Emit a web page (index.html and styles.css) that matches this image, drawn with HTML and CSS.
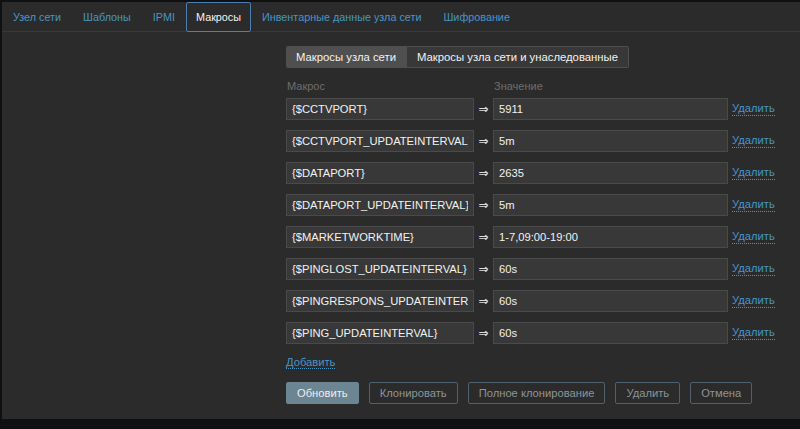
FILE: index.html
```html
<!DOCTYPE html>
<html lang="ru">
<head>
  <meta charset="UTF-8" />
  <title>Макросы узла сети</title>
  <link rel="stylesheet" href="styles.css">
</head>
<body>
  <div class="panel">
    <div class="tabs">
      <a class="tab" href="#">Узел сети</a>
      <a class="tab" href="#">Шаблоны</a>
      <a class="tab" href="#">IPMI</a>
      <a class="tab active" href="#">Макросы</a>
      <a class="tab" href="#">Инвентарные данные узла сети</a>
      <a class="tab" href="#">Шифрование</a>
    </div>

    <div class="form">
      <div class="switch">
        <button class="switch-btn selected">Макросы узла сети</button>
        <button class="switch-btn">Макросы узла сети и унаследованные</button>
      </div>

      <div class="macros head-row">
        <div class="head">Макрос</div>
        <div></div>
        <div class="head">Значение</div>
      </div>

      <div class="macros">
        <input class="field" type="text" value="{$CCTVPORT}" />
        <span class="arrow">&rArr;</span>
        <input class="field" type="text" value="5911" />
        <a class="link" href="#">Удалить</a>

        <input class="field" type="text" value="{$CCTVPORT_UPDATEINTERVAL}" />
        <span class="arrow">&rArr;</span>
        <input class="field" type="text" value="5m" />
        <a class="link" href="#">Удалить</a>

        <input class="field" type="text" value="{$DATAPORT}" />
        <span class="arrow">&rArr;</span>
        <input class="field" type="text" value="2635" />
        <a class="link" href="#">Удалить</a>

        <input class="field" type="text" value="{$DATAPORT_UPDATEINTERVAL}" />
        <span class="arrow">&rArr;</span>
        <input class="field" type="text" value="5m" />
        <a class="link" href="#">Удалить</a>

        <input class="field" type="text" value="{$MARKETWORKTIME}" />
        <span class="arrow">&rArr;</span>
        <input class="field" type="text" value="1-7,09:00-19:00" />
        <a class="link" href="#">Удалить</a>

        <input class="field" type="text" value="{$PINGLOST_UPDATEINTERVAL}" />
        <span class="arrow">&rArr;</span>
        <input class="field" type="text" value="60s" />
        <a class="link" href="#">Удалить</a>

        <input class="field" type="text" value="{$PINGRESPONS_UPDATEINTERVAL}" />
        <span class="arrow">&rArr;</span>
        <input class="field" type="text" value="60s" />
        <a class="link" href="#">Удалить</a>

        <input class="field" type="text" value="{$PING_UPDATEINTERVAL}" />
        <span class="arrow">&rArr;</span>
        <input class="field" type="text" value="60s" />
        <a class="link" href="#">Удалить</a>
      </div>

      <div class="add-row">
        <a class="link" href="#">Добавить</a>
      </div>

      <div class="actions">
        <button class="btn">Обновить</button>
        <button class="btn alt">Клонировать</button>
        <button class="btn alt">Полное клонирование</button>
        <button class="btn alt">Удалить</button>
        <button class="btn alt">Отмена</button>
      </div>
    </div>
  </div>
</body>
</html>
```

FILE: styles.css
```css
body {
  margin: 0;
  background-color: #0e1012;
  font-family: "Liberation Sans", Arial, sans-serif;
  font-size: 11px;
  color: #f2f2f2;
  overflow: hidden;
}

.panel {
  margin: 2px 0 0 2px;
  height: 417px;
  background-color: #2b2b2b;
}

.tabs {
  display: flex;
  height: 29px;
  border-bottom: 1px solid #383838;
}

.tab {
  display: block;
  box-sizing: border-box;
  height: 30px;
  line-height: 28px;
  padding: 0 10px;
  font-size: 10.8px;
  color: #4796c4;
  text-decoration: none;
  border: 1px solid transparent;
}

.tab.active {
  color: #f2f2f2;
  border-color: #4a7fb0;
  border-radius: 2px;
  padding: 0 9px;
}

.form {
  padding: 14px 0 0 284px;
}

.switch {
  display: flex;
}

.switch-btn {
  height: 22px;
  padding: 0 10px;
  font-family: inherit;
  font-size: 11.3px;
  color: #f2f2f2;
  background-color: #383838;
  border: 1px solid #4f4f4f;
  border-left: none;
}

.switch-btn.selected {
  background-color: #4f4f4f;
  border-radius: 2px 0 0 2px;
}

.switch-btn:last-child {
  border-radius: 0 2px 2px 0;
}

.macros {
  display: grid;
  grid-template-columns: 188px 19px 235px auto;
  grid-auto-rows: 22px;
  row-gap: 10px;
  align-items: center;
  justify-items: start;
}

.macros.head-row {
  grid-auto-rows: 14px;
  margin: 11px 0 5px;
}

.head {
  color: #6e6e6e;
  line-height: 14px;
  padding-left: 1px;
}

.field {
  box-sizing: border-box;
  width: 100%;
  height: 22px;
  padding: 0 5px;
  font-family: inherit;
  font-size: 11.2px;
  color: #f2f2f2;
  background-color: #383838;
  border: 1px solid #4a4a4a;
  outline: none;
}

.arrow {
  justify-self: center;
  color: #dddddd;
  font-family: "DejaVu Sans", sans-serif;
  font-size: 12px;
  font-weight: bold;
}

.link {
  color: #4796c4;
  text-decoration: none;
  border-bottom: 1px dotted #4796c4;
  line-height: 13px;
  font-size: 11.2px;
}

.macros .link {
  margin-left: 4px;
}

.add-row {
  margin-top: 11px;
  line-height: 14px;
}

.actions {
  display: flex;
  gap: 10px;
  margin-top: 13px;
}

.btn {
  height: 22px;
  padding: 0 10px;
  font-family: inherit;
  font-size: 11.2px;
  color: #eeeeee;
  background-color: #6c8593;
  border: 1px solid #6c8593;
  border-radius: 2px;
}

.btn.alt {
  color: #8e9497;
  background-color: transparent;
  border-color: #4f616c;
}
```
